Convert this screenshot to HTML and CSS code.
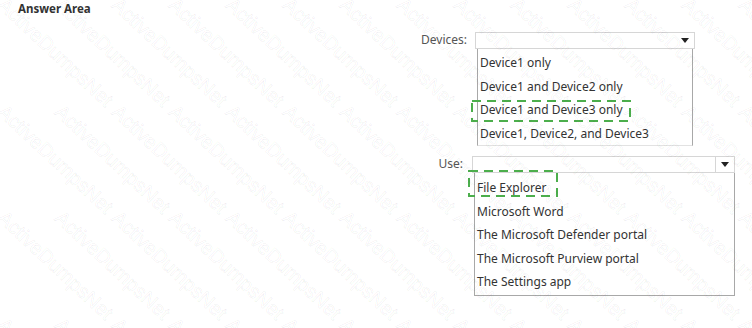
FILE: index.html
```html
<!DOCTYPE html>
<html lang="en">
<head>
    <meta charset="UTF-8">
    <meta name="viewport" content="width=device-width, initial-scale=1.0">
    <title>Answer Area</title>
    <link rel="stylesheet" href="styles.css">
</head>
<body>
    <div class="page">
        <h1 class="title">Answer Area</h1>

        <!-- Devices dropdown -->
        <div class="field field-devices">
            <span class="field-label">Devices:</span>
            <div class="dropdown">
                <div class="select">
                    <span class="arrow"></span>
                </div>
                <ul class="options">
                    <li>Device1 only</li>
                    <li>Device1 and Device2 only</li>
                    <li class="picked">
                        Device1 and Device3 only
                        <svg class="mark" width="160" height="22" viewBox="0 0 160 22">
                            <rect x="1" y="1" width="158" height="20" fill="none" stroke="#4cae4c" stroke-width="2" stroke-dasharray="9 6"/>
                        </svg>
                    </li>
                    <li>Device1, Device2, and Device3</li>
                </ul>
            </div>
        </div>

        <!-- Use dropdown -->
        <div class="field field-use">
            <span class="field-label">Use:</span>
            <div class="dropdown">
                <div class="select">
                    <span class="arrow-box"><span class="arrow"></span></span>
                </div>
                <ul class="options">
                    <li class="picked">
                        File Explorer
                        <svg class="mark" width="90" height="27" viewBox="0 0 90 27">
                            <rect x="1" y="1" width="88" height="25" fill="none" stroke="#4cae4c" stroke-width="2" stroke-dasharray="9 6"/>
                        </svg>
                    </li>
                    <li>Microsoft Word</li>
                    <li>The Microsoft Defender portal</li>
                    <li>The Microsoft Purview portal</li>
                    <li>The Settings app</li>
                </ul>
            </div>
        </div>
    </div>

    <div class="watermark" aria-hidden="true">
        <div class="wm-grid" id="watermark"></div>
    </div>

    <script>
        // fill the watermark grid
        const wm = document.getElementById('watermark');
        for (let i = 0; i < 4 * 14; i++) {
            const cell = document.createElement('div');
            cell.className = 'wm-cell';
            cell.innerHTML = '<span>ActiveDumpsNet</span>';
            wm.appendChild(cell);
        }
    </script>
</body>
</html>
```

FILE: styles.css
```css
/* Base styles */
body {
    font-family: 'Noto Sans', 'Open Sans', sans-serif;
    margin: 0;
    padding: 0;
    background: #fff;
    color: #333;
    width: 752px;
    height: 328px;
    overflow: hidden;
    position: relative;
}

.page {
    padding-top: 2px;
}

.title {
    margin: 0 0 0 18px;
    font-size: 11.5px;
    font-weight: 700;
    line-height: 14px;
    color: #333;
}

/* Dropdown rows */
.field {
    display: flex;
    align-items: flex-start;
}

.field-label {
    text-align: right;
    font-size: 12px;
    line-height: 16px;
    color: #555;
}

.field-devices {
    margin-top: 16px;
}

.field-devices .field-label {
    width: 467px;
    margin-right: 8px;
}

.field-devices .dropdown {
    width: 220px;
}

.field-use {
    margin-top: 10px;
}

.field-use .field-label {
    width: 463px;
    margin-right: 9px;
}

.field-use .dropdown {
    width: 263px;
}

.select {
    height: 15px;
    border: 1px solid #d6d6d6;
    background: #fff;
    display: flex;
    justify-content: flex-end;
    align-items: center;
}

.field-devices .select .arrow {
    margin-right: 5px;
}

.arrow {
    width: 0;
    height: 0;
    border-left: 4px solid transparent;
    border-right: 4px solid transparent;
    border-top: 5px solid #222;
}

.arrow-box {
    width: 18px;
    height: 15px;
    border-left: 1px solid #d6d6d6;
    display: flex;
    justify-content: center;
    align-items: center;
}

/* Option lists */
.options {
    list-style: none;
    margin: 0 0 0 2px;
    padding: 2px 0 0;
    border: 1px solid #a8a8a8;
    border-top: none;
    font-size: 12px;
    line-height: 23.5px;
    color: #333;
}

.field-devices .options {
    width: 214px;
    border-bottom-color: #e2e2e2;
}

.field-use .options {
    width: 259px;
    padding-top: 3px;
    padding-bottom: 1px;
}

.options li {
    padding-left: 2px;
    white-space: nowrap;
    position: relative;
}

/* Dashed highlight over the right answer */
.mark {
    position: absolute;
    pointer-events: none;
}

.field-devices .mark {
    left: -7px;
    top: 2px;
}

.field-use .mark {
    left: -7px;
    top: -6px;
}

/* Watermark over the whole picture */
.watermark {
    position: absolute;
    top: 0;
    left: 0;
    right: 0;
    bottom: 0;
    overflow: hidden;
    pointer-events: none;
}

.wm-grid {
    display: grid;
    grid-template-columns: repeat(14, 57px);
    grid-auto-rows: 106.5px;
    margin-top: -6px;
}

.wm-cell span {
    display: block;
    width: 170px;
    font-family: 'Liberation Sans', sans-serif;
    font-size: 20px;
    line-height: 20px;
    color: rgba(0, 0, 0, 0.015);
    -webkit-text-stroke: 0.6px rgba(0, 0, 0, 0.08);
    transform-origin: left top;
    transform: translate(8px, 0) rotate(43deg);
}
```
